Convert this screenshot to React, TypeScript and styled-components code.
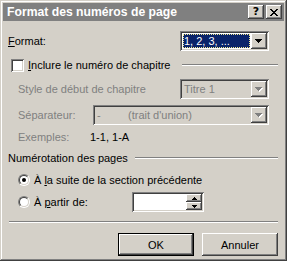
import React from 'react';
import styled, { createGlobalStyle } from 'styled-components';

const GlobalStyle = createGlobalStyle`
  body {
    margin: 0;
    background: #d4d0c8;
  }
`;

const raised = `
  box-shadow: inset -1px -1px #404040, inset 1px 1px #ffffff,
    inset -2px -2px #808080, inset 2px 2px #d4d0c8;
`;

const sunken = `
  box-shadow: inset 1px 1px #808080, inset -1px -1px #ffffff,
    inset 2px 2px #404040, inset -2px -2px #d4d0c8;
`;

const Window = styled.div`
  width: 287px;
  height: 261px;
  box-sizing: border-box;
  padding: 3px;
  background: #d4d0c8;
  box-shadow: inset -1px -1px #404040, inset 1px 1px #d4d0c8,
    inset -2px -2px #808080, inset 2px 2px #ffffff;
  font-family: 'Liberation Sans', Arial, sans-serif;
  font-size: 11px;
  color: #000;
  display: flex;
  flex-direction: column;
`;

const TitleBar = styled.div`
  height: 18px;
  background: #808080;
  display: flex;
  align-items: center;
  padding: 0 2px 0 2px;
`;

const Title = styled.span`
  flex: 1;
  color: #ffffff;
  font-weight: bold;
  font-size: 12.2px;
  padding-left: 2px;
  white-space: nowrap;
`;

const CaptionButton = styled.div<{ $gap?: number }>`
  width: 16px;
  height: 14px;
  margin-left: ${(p) => p.$gap || 0}px;
  background: #d4d0c8;
  ${raised}
  display: flex;
  align-items: center;
  justify-content: center;
  font-weight: bold;
  font-size: 11px;
  line-height: 14px;
  font-family: 'DejaVu Sans', sans-serif;
`;

const Content = styled.div`
  flex: 1;
  padding: 0 6px 0 5px;
  display: flex;
  flex-direction: column;
`;

const Row = styled.div<{ $top: number; $h?: number; $indent?: number }>`
  display: flex;
  align-items: center;
  height: ${(p) => p.$h || 14}px;
  margin-top: ${(p) => p.$top}px;
  padding-left: ${(p) => p.$indent || 0}px;
  white-space: nowrap;
`;

const Label = styled.span<{ $width?: number; $disabled?: boolean }>`
  width: ${(p) => (p.$width ? `${p.$width}px` : 'auto')};
  flex-shrink: 0;
  color: ${(p) => (p.$disabled ? '#808080' : '#000')};
`;

const Combo = styled.div<{ $width: number; $disabled?: boolean }>`
  width: ${(p) => p.$width}px;
  height: 20px;
  box-sizing: border-box;
  padding: 2px;
  display: flex;
  background: ${(p) => (p.$disabled ? '#d4d0c8' : '#ffffff')};
  ${sunken}
`;

const ComboValue = styled.div<{ $disabled?: boolean; $selected?: boolean }>`
  flex: 1;
  display: flex;
  align-items: center;
  margin: 1px;
  padding-left: 1px;
  color: ${(p) => (p.$disabled ? '#808080' : p.$selected ? '#ffffff' : '#000')};
  background: ${(p) => (p.$selected ? '#0a246a' : 'transparent')};
  outline: ${(p) => (p.$selected ? '1px dotted #f0e890' : 'none')};
  outline-offset: -1px;
`;

const DropButton = styled.div`
  width: 16px;
  height: 16px;
  background: #d4d0c8;
  ${raised}
  display: flex;
  align-items: center;
  justify-content: center;
`;

const Separator = styled.span<{ $width: number }>`
  display: inline-block;
  width: ${(p) => p.$width}px;
`;

const EtchedLine = styled.div<{ $gap: number }>`
  flex: 1;
  height: 0;
  margin-left: ${(p) => p.$gap}px;
  border-top: 1px solid #808080;
  border-bottom: 1px solid #ffffff;
`;

const CheckBox = styled.div`
  width: 13px;
  height: 13px;
  box-sizing: border-box;
  background: #ffffff;
  ${sunken}
  margin-right: 4px;
  flex-shrink: 0;
`;

const RadioOuter = styled.div`
  width: 12px;
  height: 12px;
  box-sizing: border-box;
  border-radius: 50%;
  border: 1px solid;
  border-color: #808080 #ffffff #ffffff #808080;
  margin-right: 4px;
  flex-shrink: 0;
`;

const RadioInner = styled.div<{ $checked?: boolean }>`
  width: 10px;
  height: 10px;
  box-sizing: border-box;
  border-radius: 50%;
  border: 1px solid;
  border-color: #404040 #d4d0c8 #d4d0c8 #404040;
  background: #ffffff;
  display: flex;
  align-items: center;
  justify-content: center;

  &::after {
    content: '';
    display: ${(p) => (p.$checked ? 'block' : 'none')};
    width: 4px;
    height: 4px;
    border-radius: 50%;
    background: #000;
  }
`;

const SpinBox = styled.div`
  width: 72px;
  height: 20px;
  box-sizing: border-box;
  padding: 2px;
  display: flex;
  background: #ffffff;
  ${sunken}
`;

const SpinField = styled.div`
  flex: 1;
`;

const SpinButtons = styled.div`
  width: 16px;
  display: flex;
  flex-direction: column;
`;

const SpinButton = styled.div`
  flex: 1;
  background: #d4d0c8;
  ${raised}
  display: flex;
  align-items: center;
  justify-content: center;
`;

const Divider = styled.div`
  height: 0;
  margin: 9px 0 0 1px;
  border-top: 1px solid #808080;
  border-bottom: 1px solid #ffffff;
`;

const ButtonRow = styled.div`
  display: flex;
  justify-content: flex-end;
  gap: 8px;
  margin-top: 10px;
`;

const PushButton = styled.div<{ $default?: boolean }>`
  width: 76px;
  height: 23px;
  box-sizing: border-box;
  background: #d4d0c8;
  display: flex;
  align-items: center;
  justify-content: center;
  ${(p) =>
    p.$default
      ? `box-shadow: inset 0 0 0 1px #000, inset -2px -2px #404040, inset 2px 2px #ffffff,
    inset -3px -3px #808080, inset 3px 3px #d4d0c8;`
      : raised}
`;

const CloseGlyph = () => (
  <svg width="8" height="7" shapeRendering="crispEdges">
    {[
      [0, 0, 2], [6, 0, 2],
      [1, 1, 2], [5, 1, 2],
      [2, 2, 4],
      [3, 3, 2],
      [2, 4, 4],
      [1, 5, 2], [5, 5, 2],
      [0, 6, 2], [6, 6, 2],
    ].map(([x, y, w], i) => (
      <rect key={i} x={x} y={y} width={w} height={1} fill="#000" />
    ))}
  </svg>
);

const DownArrow: React.FC<{ disabled?: boolean }> = ({ disabled }) => (
  <svg width="8" height="5" shapeRendering="crispEdges">
    {disabled &&
      [0, 1, 2, 3].map((r) => (
        <rect key={`s${r}`} x={r + 1} y={r + 1} width={7 - r * 2} height={1} fill="#fff" />
      ))}
    {[0, 1, 2, 3].map((r) => (
      <rect key={r} x={r} y={r} width={7 - r * 2} height={1} fill={disabled ? '#808080' : '#000'} />
    ))}
  </svg>
);

const SmallArrow: React.FC<{ up?: boolean }> = ({ up }) => (
  <svg width="5" height="3" shapeRendering="crispEdges">
    {[0, 1, 2].map((r) => (
      <rect key={r} x={r} y={up ? 2 - r : r} width={5 - r * 2} height={1} fill="#000" />
    ))}
  </svg>
);

export default function App() {
  return (
    <>
      <GlobalStyle />
      <Window>
        <TitleBar>
          <Title>Format des numéros de page</Title>
          <CaptionButton>?</CaptionButton>
          <CaptionButton $gap={2}>
            <CloseGlyph />
          </CaptionButton>
        </TitleBar>
        <Content>
          <Row $top={10} $h={20}>
            <Label $width={172}>
              <u>F</u>ormat:
            </Label>
            <Combo $width={89}>
              <ComboValue $selected>1, 2, 3, ...</ComboValue>
              <DropButton>
                <DownArrow />
              </DropButton>
            </Combo>
          </Row>

          <Row $top={7} $indent={3}>
            <CheckBox />
            <Label>
              <u>I</u>nclure le numéro de chapitre
            </Label>
            <EtchedLine $gap={12} />
          </Row>

          <Row $top={7} $h={20} $indent={10}>
            <Label $width={162} $disabled>
              Style de début de chapitre
            </Label>
            <Combo $width={89} $disabled>
              <ComboValue $disabled>Titre 1</ComboValue>
              <DropButton>
                <DownArrow disabled />
              </DropButton>
            </Combo>
          </Row>

          <Row $top={6} $h={20} $indent={10}>
            <Label $width={75} $disabled>
              Séparateur:
            </Label>
            <Combo $width={176} $disabled>
              <ComboValue $disabled>
                <Separator $width={31}>-</Separator>(trait d'union)
              </ComboValue>
              <DropButton>
                <DownArrow disabled />
              </DropButton>
            </Combo>
          </Row>

          <Row $top={5} $indent={10}>
            <Label $width={72} $disabled>
              Exemples:
            </Label>
            <Label>1-1, 1-A</Label>
          </Row>

          <Row $top={7}>
            <Label>Numérotation des pages</Label>
            <EtchedLine $gap={7} />
          </Row>

          <Row $top={8} $indent={10}>
            <RadioOuter>
              <RadioInner $checked />
            </RadioOuter>
            <Label>
              À <u>l</u>a suite de la section précédente
            </Label>
          </Row>

          <Row $top={5} $h={20} $indent={10}>
            <RadioOuter>
              <RadioInner />
            </RadioOuter>
            <Label $width={98}>
              À <u>p</u>artir de:
            </Label>
            <SpinBox>
              <SpinField />
              <SpinButtons>
                <SpinButton>
                  <SmallArrow up />
                </SpinButton>
                <SpinButton>
                  <SmallArrow />
                </SpinButton>
              </SpinButtons>
            </SpinBox>
          </Row>

          <Divider />

          <ButtonRow>
            <PushButton $default>OK</PushButton>
            <PushButton>Annuler</PushButton>
          </ButtonRow>
        </Content>
      </Window>
    </>
  );
}
